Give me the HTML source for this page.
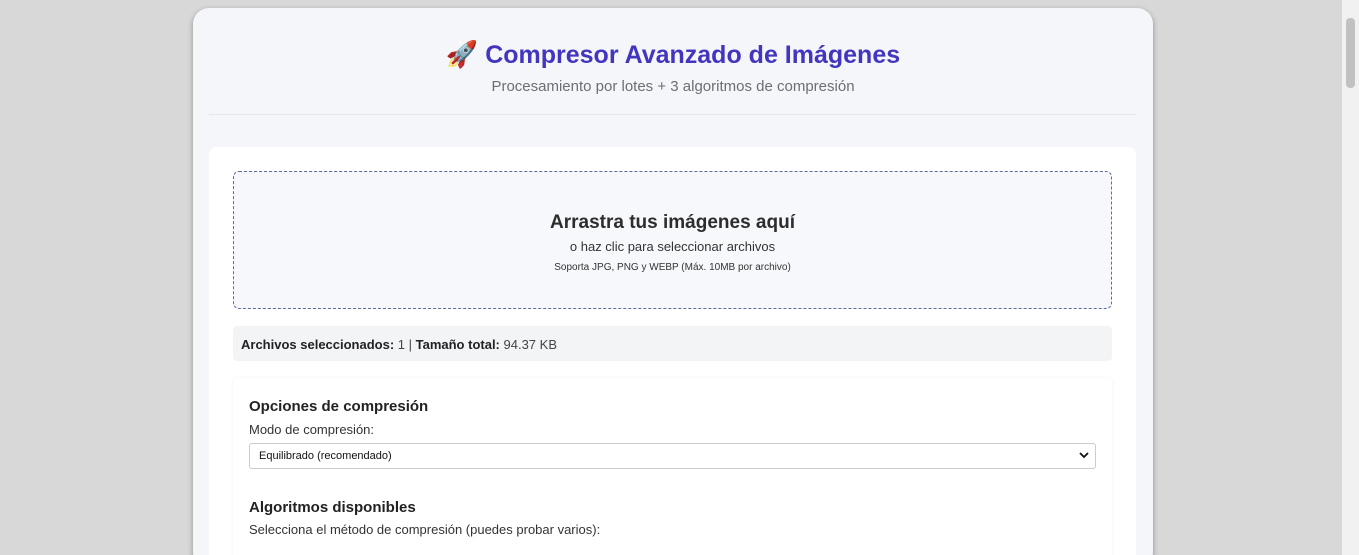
<!DOCTYPE html><html style="overflow:hidden;height:555px"><head><meta charset="utf-8"><style>
*{box-sizing:border-box;margin:0;padding:0}
body{width:1359px;height:555px;overflow:hidden;background:#d8d8d8;font-family:"Liberation Sans","DejaVu Sans",sans-serif;color:#2b2b2b;position:relative}
.sb{position:absolute;right:0;top:0;width:17px;height:555px;background:#f1f1f1}
.sb i{position:absolute;left:4px;top:18px;width:9px;height:70px;background:#c1c1c1;border-radius:4px}
.c{position:absolute;left:193px;top:8px;width:960px;height:560px;background:#f5f6fa;border-radius:16px;box-shadow:0 2px 6px rgba(0,0,0,.35);overflow:hidden}
h1{position:absolute;left:0;right:0;top:31px;text-align:center;font-size:25px;font-weight:bold;color:#4236bf}
.sub{position:absolute;left:0;right:0;top:70px;text-align:center;font-size:15px;color:#6b6e76}
.hr{position:absolute;left:16px;width:927px;top:106px;border-top:1px solid #e6e7ec}
.card{position:absolute;left:16px;top:139px;width:927px;height:420px;background:#fff;border-radius:8px}
.dz{position:absolute;left:24px;top:24px;width:879px;height:138px;background:#f7f8fc;border:1px dashed #5d6a9c;border-radius:6px;text-align:center}
.dz b{display:block;margin-top:40px;font-size:19px;color:#2d2d2d}
.dz p{font-size:13px;margin-top:5px;color:#333}
.dz small{display:block;font-size:10px;margin-top:8px;color:#333}
.info{position:absolute;left:24px;top:179px;width:879px;height:35px;background:#f3f4f6;border-radius:4px;font-size:13px;padding:11px 8px;color:#444}
.info b{color:#222}
.opt{position:absolute;left:24px;top:231px;width:879px;height:200px;background:#fff;box-shadow:0 0 4px rgba(0,0,0,.06);border-radius:4px;padding:0 16px}
.opt h3{font-size:15px;margin-top:20px;color:#222}
.opt .l{font-size:13px;margin-top:7px;color:#333}
.sel{margin-top:6px;height:26px;border:1px solid #ccc;border-radius:3px;font-size:11px;padding:6px 9px;position:relative;color:#111}
.sel svg{position:absolute;right:6px;top:8px}
</style></head><body>
<div class="c">
<h1><span style="font-size:26px">🚀</span> Compresor Avanzado de Imágenes</h1>
<div class="sub">Procesamiento por lotes + 3 algoritmos de compresión</div>
<div class="hr"></div>
<div class="card">
<div class="dz"><b>Arrastra tus imágenes aquí</b><p>o haz clic para seleccionar archivos</p><small>Soporta JPG, PNG y WEBP (Máx. 10MB por archivo)</small></div>
<div class="info"><b>Archivos seleccionados:</b> 1 | <b>Tamaño total:</b> 94.37 KB</div>
<div class="opt"><h3>Opciones de compresión</h3><div class="l">Modo de compresión:</div>
<div class="sel">Equilibrado (recomendado)<svg width="10" height="7" viewBox="0 0 10 7"><path d="M1 1l4 4 4-4" stroke="#111" stroke-width="1.8" fill="none"/></svg></div>
<h3 style="margin-top:30px">Algoritmos disponibles</h3><div class="l" style="margin-top:6px">Selecciona el método de compresión (puedes probar varios):</div></div>
</div></div>
<div class="sb"><i></i></div>
</body></html>
